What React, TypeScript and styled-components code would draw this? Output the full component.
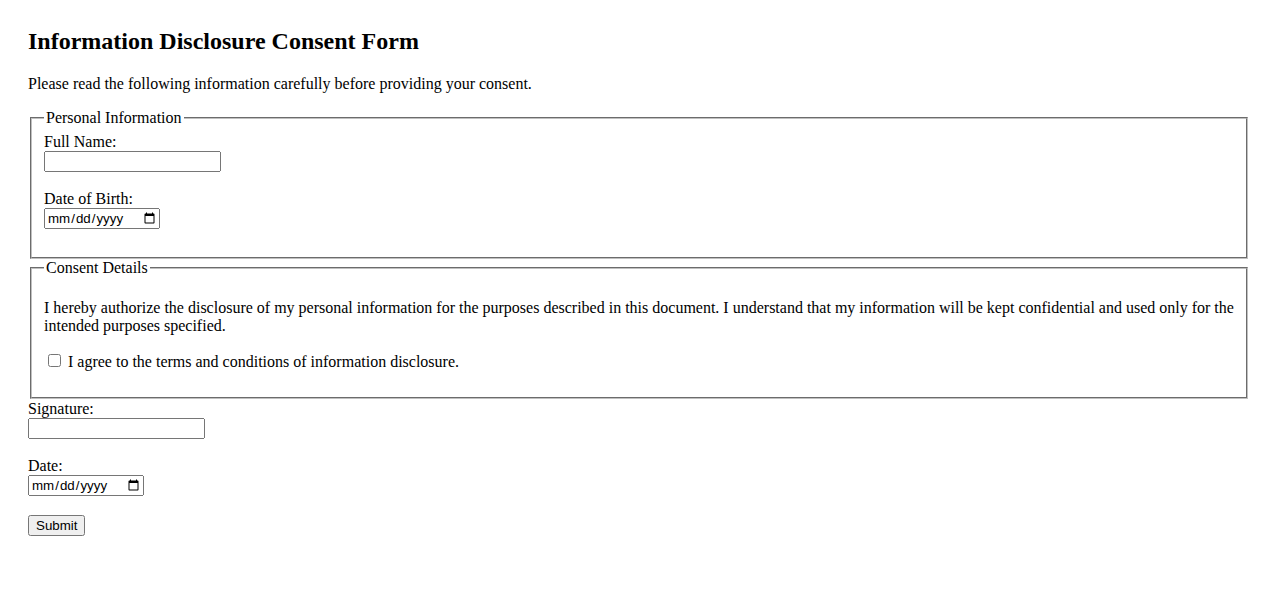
import React from "react";
import styled, { createGlobalStyle } from "styled-components";

const GlobalStyle = createGlobalStyle`
  html, body {
    margin: 0;
    padding: 0;
    background: #fff;
  }
  body {
    font-family: "Liberation Serif", "Times New Roman", serif;
    font-size: 16px;
    color: #000;
  }
`;

const Page = styled.div`
  padding: 28px;
`;

const Title = styled.h2`
  font-size: 24px;
  font-weight: bold;
  margin: 0 0 20px;
`;

const Intro = styled.p`
  margin: 16px 0;
`;

const Section = styled.fieldset<{ $gapAfter?: number }>`
  margin: 0 2px ${(p) => p.$gapAfter ?? 0}px;
  padding: 5.6px 12px 10px;
  border: 2px groove rgb(192, 192, 192);
`;

const Legend = styled.legend`
  padding: 0 2px;
`;

const Label = styled.label``;

const TextInput = styled.input.attrs({ type: "text" })`
  box-sizing: border-box;
  width: 177px;
  font: 13.333px "Liberation Sans", Arial, sans-serif;
`;

const DateInput = styled.input.attrs({ type: "date" })`
  box-sizing: border-box;
  width: 116px;
  font: 13.333px "Liberation Sans", Arial, sans-serif;
`;

const Statement = styled.p`
  margin: 16px 0;
`;

const AgreeRow = styled.p`
  margin: 16px 0;
`;

const Checkbox = styled.input.attrs({ type: "checkbox" })`
  margin: 3px 3px 3px 4px;
`;

const SubmitButton = styled.button`
  margin-top: 1px;
  font: 13.333px "Liberation Sans", Arial, sans-serif;
`;

export default function App() {
  return (
    <>
      <GlobalStyle />
      <Page>
        <Title>Information Disclosure Consent Form</Title>
        <Intro>Please read the following information carefully before providing your consent.</Intro>
        <form onSubmit={(e) => e.preventDefault()}>
          <Section>
            <Legend>Personal Information</Legend>
            <Label htmlFor="fullName">Full Name:</Label>
            <br />
            <TextInput id="fullName" />
            <br />
            <br />
            <Label htmlFor="dob">Date of Birth:</Label>
            <br />
            <DateInput id="dob" />
            <br />
            <br />
          </Section>
          <Section $gapAfter={1}>
            <Legend>Consent Details</Legend>
            <Statement>
              I hereby authorize the disclosure of my personal information for the purposes described in this
              document. I understand that my information will be kept confidential and used only for the intended
              purposes specified.
            </Statement>
            <AgreeRow>
              <Checkbox id="agree" /> <Label htmlFor="agree">I agree to the terms and conditions of information disclosure.</Label>
            </AgreeRow>
          </Section>
          <Label htmlFor="signature">Signature:</Label>
          <br />
          <TextInput id="signature" />
          <br />
          <br />
          <Label htmlFor="date">Date:</Label>
          <br />
          <DateInput id="date" />
          <br />
          <br />
          <SubmitButton type="submit">Submit</SubmitButton>
        </form>
      </Page>
    </>
  );
}
